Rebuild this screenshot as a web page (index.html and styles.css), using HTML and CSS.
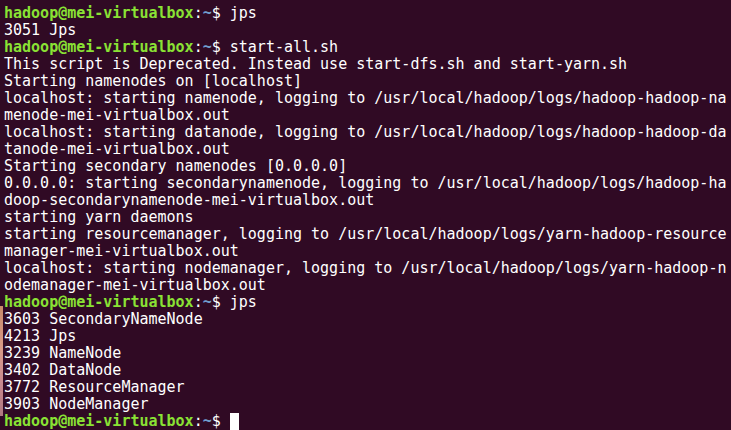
FILE: index.html
```html
<!DOCTYPE html>
<html>
<head>
<meta charset="utf-8">
<link rel="stylesheet" href="styles.css">
</head>
<body>
<div class="edge"></div>
<pre class="term"><span class="u">hadoop@mei-virtualbox</span>:<span class="p">~</span>$ jps
3051 Jps
<span class="u">hadoop@mei-virtualbox</span>:<span class="p">~</span>$ start-all.sh
This script is Deprecated. Instead use start-dfs.sh and start-yarn.sh
Starting namenodes on [localhost]
localhost: starting namenode, logging to /usr/local/hadoop/logs/hadoop-hadoop-na
menode-mei-virtualbox.out
localhost: starting datanode, logging to /usr/local/hadoop/logs/hadoop-hadoop-da
tanode-mei-virtualbox.out
Starting secondary namenodes [0.0.0.0]
0.0.0.0: starting secondarynamenode, logging to /usr/local/hadoop/logs/hadoop-ha
doop-secondarynamenode-mei-virtualbox.out
starting yarn daemons
starting resourcemanager, logging to /usr/local/hadoop/logs/yarn-hadoop-resource
manager-mei-virtualbox.out
localhost: starting nodemanager, logging to /usr/local/hadoop/logs/yarn-hadoop-n
odemanager-mei-virtualbox.out
<span class="u">hadoop@mei-virtualbox</span>:<span class="p">~</span>$ jps
3603 SecondaryNameNode
4213 Jps
3239 NameNode
3402 DataNode
3772 ResourceManager
3903 NodeManager
<span class="u">hadoop@mei-virtualbox</span>:<span class="p">~</span>$ <span class="cur"> </span></pre>
</body>
</html>
```
FILE: styles.css
```css
html, body {
  margin: 0;
  padding: 0;
  background: #300a24;
  width: 731px;
  height: 430px;
  overflow: hidden;
}
body {
  position: relative;
}
.term {
  margin: 0;
  padding: 5px 0 0 4px;
  font-family: "DejaVu Sans Mono", "Liberation Mono", monospace;
  font-size: 15px;
  line-height: 17px;
  color: #ffffff;
  white-space: pre;
}
.u {
  color: #8ae234;
  font-weight: bold;
}
.p {
  color: #729fcf;
  font-weight: bold;
}
.cur {
  display: inline-block;
  width: 9px;
  height: 17px;
  background: #ffffff;
  vertical-align: top;
}
.edge {
  position: absolute;
  left: 0;
  top: 306px;
  width: 3px;
  height: 110px;
  background: linear-gradient(#c98a6a, #d99a88 40%, #c88a90 70%, #b07880);
}
```
